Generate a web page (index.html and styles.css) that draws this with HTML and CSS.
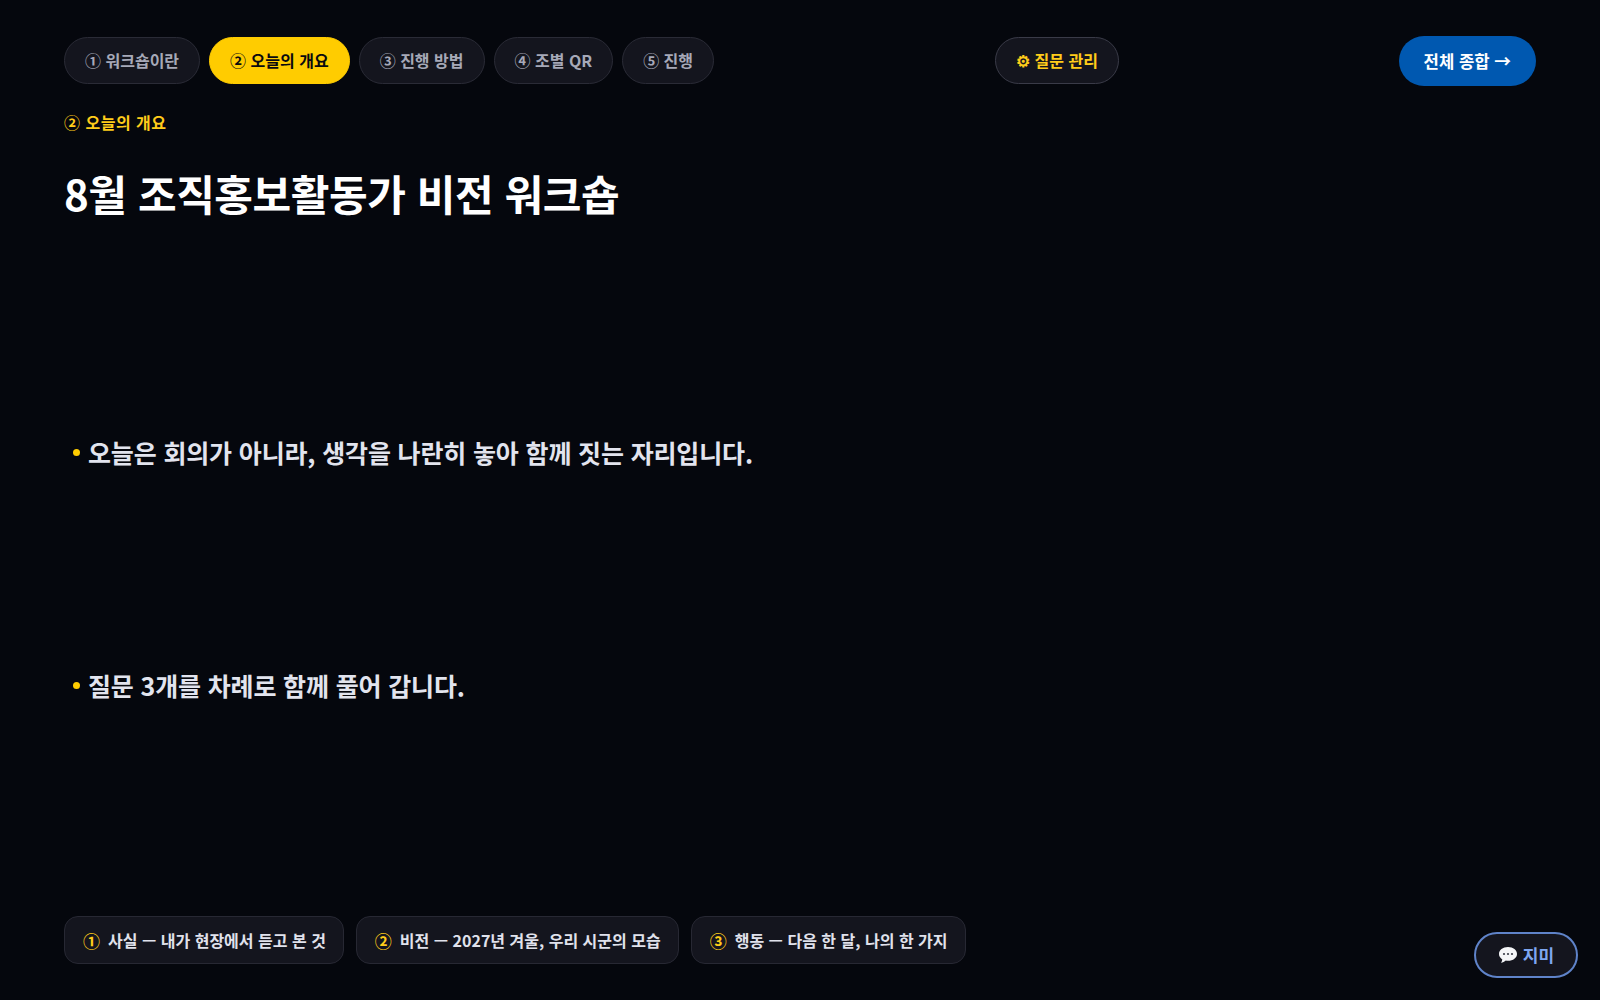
FILE: index.html
```html
<!DOCTYPE html>
<html lang="ko">
<head>
    <meta charset="UTF-8">
    <title>8월 조직홍보활동가 비전 워크숍</title>
    <link rel="stylesheet" href="styles.css">
</head>
<body>
    <div class="page">
        <header class="topbar">
            <nav class="tabs">
                <span class="tab">① 워크숍이란</span>
                <span class="tab active">② 오늘의 개요</span>
                <span class="tab">③ 진행 방법</span>
                <span class="tab">④ 조별 QR</span>
                <span class="tab">⑤ 진행</span>
            </nav>
            <span class="tab manage">⚙ 질문 관리</span>
            <span class="summary">전체 종합 →</span>
        </header>

        <div class="eyebrow">② 오늘의 개요</div>
        <h1 class="title">8월 조직홍보활동가 비전 워크숍</h1>

        <ul class="points">
            <li>오늘은 회의가 아니라, 생각을 나란히 놓아 함께 짓는 자리입니다.</li>
            <li>질문 3개를 차례로 함께 풀어 갑니다.</li>
        </ul>

        <div class="chips">
            <div class="chip"><span class="num">①</span>사실 — 내가 현장에서 듣고 본 것</div>
            <div class="chip"><span class="num">②</span>비전 — 2027년 겨울, 우리 시군의 모습</div>
            <div class="chip"><span class="num">③</span>행동 — 다음 한 달, 나의 한 가지</div>
        </div>
    </div>

    <button class="jimi">
        <svg class="bubble" viewBox="0 0 20 20" width="20" height="20" aria-hidden="true">
            <path d="M10 2C4.800 2 1 5 1 9c0 2.300 1.300 4.200 3.300 5.400-.1 1.100-.6 2.400-1.300 3.400 1.800-.2 3.600-1.100 4.800-2.200.7.1 1.400.2 2.200.2 5.200 0 9-3 9-6.800S15.200 2 10 2z" fill="#f4f5f8"/>
            <circle cx="6" cy="9" r="1.100" fill="#3a3d48"/>
            <circle cx="10" cy="9" r="1.100" fill="#3a3d48"/>
            <circle cx="14" cy="9" r="1.100" fill="#3a3d48"/>
        </svg>
        지미
    </button>
</body>
</html>
```

FILE: styles.css
```css
* {
    box-sizing: border-box;
}
html, body {
    margin: 0;
    padding: 0;
    height: 100%;
}
body {
    font-family: "Noto Sans CJK KR", "Noto Sans", sans-serif;
    background-color: #05070d;
    color: #fff;
    overflow: hidden;
}
.page {
    height: 1000px;
    padding: 36px 64px 36px 64px;
    display: flex;
    flex-direction: column;
}
.topbar {
    display: flex;
    align-items: center;
    height: 50px;
}
.tabs {
    display: flex;
    gap: 9px;
    margin-bottom: 1px;
}
.tab {
    display: inline-flex;
    align-items: center;
    height: 47px;
    padding: 0 20px 1px;
    border-radius: 24px;
    background-color: #14151e;
    border: 1px solid #2a2b36;
    color: #a6a9b8;
    font-size: 16px;
    font-weight: 700;
    white-space: nowrap;
}
.tab.active {
    background-color: #ffcc00;
    border-color: #ffcc00;
    color: #0a0a10;
}
.tab.manage {
    margin-left: 281px;
    margin-bottom: 1px;
    color: #ffcc1a;
    border-color: #3a3b48;
}
.summary {
    margin-left: auto;
    display: inline-flex;
    align-items: center;
    height: 50px;
    padding: 0 25px 1px;
    border-radius: 26px;
    background-color: #0058b0;
    color: #fff;
    font-size: 16.700px;
    font-weight: 700;
    white-space: nowrap;
}
.eyebrow {
    margin-top: 21px;
    color: #ffcc1a;
    font-size: 16px;
    font-weight: 700;
    line-height: 30px;
    letter-spacing: 0.5px;
}
.title {
    margin: 24px 0 0;
    font-size: 42px;
    font-weight: 700;
    line-height: 64px;
    letter-spacing: -0.42px;
}
.points {
    flex: 1;
    list-style: none;
    margin: 0;
    padding: 0 0 3px 9px;
    display: flex;
    flex-direction: column;
    justify-content: center;
    gap: 196px;
}
.points li {
    display: flex;
    align-items: center;
    color: #e2e4ee;
    font-size: 25px;
    font-weight: 700;
    line-height: 37px;
    letter-spacing: -0.15px;
}
.points li::before {
    content: "";
    width: 7px;
    height: 7px;
    margin-right: 8px;
    border-radius: 50%;
    background-color: #ffcc00;
}
.chips {
    display: flex;
    gap: 12px;
}
.chip {
    display: flex;
    align-items: center;
    height: 48px;
    padding: 0 17px 0 18px;
    border-radius: 14px;
    background-color: #14151e;
    border: 1px solid #272833;
    color: #e0e2ec;
    font-size: 16px;
    font-weight: 600;
    white-space: nowrap;
}
.num {
    margin-right: 8px;
    color: #ffcc1a;
    font-size: 17px;
}
.jimi {
    position: fixed;
    right: 22px;
    bottom: 22px;
    display: flex;
    align-items: center;
    justify-content: center;
    gap: 5px;
    width: 104px;
    height: 46px;
    padding-bottom: 2px;
    border-radius: 23px;
    background-color: #14151e;
    border: 2px solid #5f83c9;
    color: #7ea6f0;
    font-family: inherit;
    font-size: 17px;
    font-weight: 700;
}
```
